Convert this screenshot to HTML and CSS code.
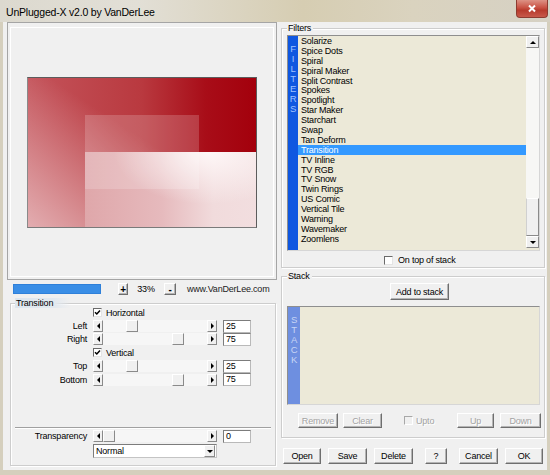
FILE: index.html
```html
<!doctype html>
<html lang="en">
  <head>
    <meta charset="UTF-8" />
    <title>UnPlugged-X v2.0 by VanDerLee</title>
    <link rel="stylesheet" href="styles.css">
  </head>
  <body>
    <div class="window">
      <div class="titlebar">
        <span class="title">UnPlugged-X v2.0 by VanDerLee</span>
        <span class="close">
          <svg viewBox="0 0 10 9" width="10" height="9"><path d="M2 1.5 L8 7.5 M8 1.5 L2 7.5" stroke="#fff" stroke-width="2" /></svg>
        </span>
      </div>
      <div class="client">
        <div class="left">
          <div class="preview">
            <div class="preview-inner">
              <div class="pic">
                <div class="pic-light"></div>
                <div class="pic-box"></div>
              </div>
            </div>
          </div>

          <div class="zoom-row">
            <div class="progress"></div>
            <span class="btn tiny">+</span>
            <span class="zoom-val">33%</span>
            <span class="btn tiny minus">-</span>
            <span class="url">www.VanDerLee.com</span>
          </div>

          <div class="group transition">
            <span class="group-title blue">Transition</span>
            <div class="params">
              <span></span>
              <span class="check"><span class="cb"><svg viewBox="0 0 7 7" width="7" height="7"><path d="M1 3.2 L2.8 5 L6 1.4" fill="none" stroke="#000" stroke-width="1.5" /></svg></span>Horizontal</span>
              <span></span>

              <span class="lbl">Left</span>
              <div class="slider"><span class="sbtn arr-l"></span><span class="track"><span class="thumb" style="--v: 0.25"></span></span><span class="sbtn arr-r"></span></div>
              <span class="edit">25</span>

              <span class="lbl">Right</span>
              <div class="slider"><span class="sbtn arr-l"></span><span class="track"><span class="thumb" style="--v: 0.75"></span></span><span class="sbtn arr-r"></span></div>
              <span class="edit">75</span>

              <span></span>
              <span class="check"><span class="cb"><svg viewBox="0 0 7 7" width="7" height="7"><path d="M1 3.2 L2.8 5 L6 1.4" fill="none" stroke="#000" stroke-width="1.5" /></svg></span>Vertical</span>
              <span></span>

              <span class="lbl">Top</span>
              <div class="slider"><span class="sbtn arr-l"></span><span class="track"><span class="thumb" style="--v: 0.25"></span></span><span class="sbtn arr-r"></span></div>
              <span class="edit">25</span>

              <span class="lbl">Bottom</span>
              <div class="slider"><span class="sbtn arr-l"></span><span class="track"><span class="thumb" style="--v: 0.75"></span></span><span class="sbtn arr-r"></span></div>
              <span class="edit">75</span>
            </div>

            <div class="separator"></div>

            <div class="params blend">
              <span class="lbl">Transparency</span>
              <div class="slider"><span class="sbtn arr-l"></span><span class="track"><span class="thumb" style="--v: 0"></span></span><span class="sbtn arr-r"></span></div>
              <span class="edit">0</span>

              <span></span>
              <div class="combo"><span class="combo-text">Normal</span><span class="sbtn arr-d"></span></div>
              <span></span>
            </div>
          </div>
        </div>

        <div class="right">
          <div class="group filters">
            <span class="group-title">Filters</span>
            <div class="listbox">
              <div class="strip">
                <span>F</span><span>I</span><span>L</span><span>T</span><span>E</span><span>R</span><span>S</span>
              </div>
              <div class="items">
                <div class="item">Solarize</div>
                <div class="item">Spice Dots</div>
                <div class="item">Spiral</div>
                <div class="item">Spiral Maker</div>
                <div class="item">Split Contrast</div>
                <div class="item">Spokes</div>
                <div class="item">Spotlight</div>
                <div class="item">Star Maker</div>
                <div class="item">Starchart</div>
                <div class="item">Swap</div>
                <div class="item">Tan Deform</div>
                <div class="item selected">Transition</div>
                <div class="item">TV Inline</div>
                <div class="item">TV RGB</div>
                <div class="item">TV Snow</div>
                <div class="item">Twin Rings</div>
                <div class="item">US Comic</div>
                <div class="item">Vertical Tile</div>
                <div class="item">Warning</div>
                <div class="item">Wavemaker</div>
                <div class="item">Zoomlens</div>
              </div>
              <div class="vscroll">
                <span class="sbtn arr-u"></span>
                <span class="vtrack"></span>
                <span class="vthumb"></span>
                <span class="sbtn arr-d"></span>
              </div>
            </div>
            <div class="ontop"><span class="cb"></span>On top of stack</div>
          </div>

          <div class="group stack">
            <span class="group-title">Stack</span>
            <span class="btn add">Add to stack</span>
            <div class="listbox stack-list">
              <div class="strip light">
                <span>S</span><span>T</span><span>A</span><span>C</span><span>K</span>
              </div>
              <div class="items"></div>
            </div>
            <div class="stack-buttons">
              <span class="btn off remove">Remove</span>
              <span class="btn off clear">Clear</span>
              <span class="upto"><span class="cb off"></span>Upto</span>
              <span class="btn off up">Up</span>
              <span class="btn off down">Down</span>
            </div>
          </div>

          <div class="dialog-buttons">
            <span class="btn open">Open</span>
            <span class="btn save">Save</span>
            <span class="btn delete">Delete</span>
            <span class="btn help">?</span>
            <span class="btn cancel">Cancel</span>
            <span class="btn ok">OK</span>
          </div>
        </div>
      </div>
    </div>
  </body>
</html>
```

FILE: styles.css
```css
* {
  box-sizing: border-box;
}
body {
  margin: 0;
  font-family: "Liberation Sans", Arial, sans-serif;
  font-size: 9px;
  letter-spacing: -0.2px;
  color: #000;
  background: #fff;
}
.window {
  width: 550px;
  height: 475px;
  display: flex;
  flex-direction: column;
  background: #d5cfbd;
  overflow: hidden;
}
.titlebar {
  height: 22px;
  flex: none;
  display: flex;
  align-items: center;
  padding-left: 6px;
  position: relative;
  background: linear-gradient(to right, #dcd9cf 0%, #e2dfd6 25%, #d6cdb2 55%, #dad3bf 75%, #d6d1c4 100%);
}
.title {
  font-size: 10.5px;
  letter-spacing: -0.2px;
  margin-top: 2px;
}
.close {
  position: absolute;
  top: 0;
  right: 2px;
  width: 32px;
  height: 18px;
  border: 1px solid #8d3b30;
  border-top: none;
  border-radius: 0 0 4px 4px;
  background: linear-gradient(#dd9285 0%, #c95244 45%, #b73a2c 60%, #c8594a 100%);
  display: flex;
  align-items: center;
  justify-content: center;
}
.client {
  flex: 1;
  margin: 0 3px 5px 3px;
  padding: 0 2px 0 4px;
  background: #f0f0f0;
  display: flex;
  gap: 4px;
}
.left {
  width: 270px;
  display: flex;
  flex-direction: column;
}
.right {
  width: 264px;
  display: flex;
  flex-direction: column;
}

/* preview */
.preview {
  height: 258px;
  border: 1px solid #a5a5a5;
  padding: 4px 2px 2px 2px;
  display: flex;
}
.preview-inner {
  flex: 1;
  border: 1px solid #fff;
  display: flex;
  align-items: center;
  justify-content: center;
}
.pic {
  width: 230px;
  height: 151px;
  border: 1px solid #5c5c5c;
  border-bottom-color: #7a7a7a;
  border-left-color: #8a8a8a;
  position: relative;
  background:
    linear-gradient(to top right, rgba(255, 255, 255, 0.52) 0%, rgba(255, 255, 255, 0) 55%),
    linear-gradient(to right, #c4545b 0%, #b9393f 50%, #a80d18 78%, #a3000c 100%);
}
.pic-light {
  position: absolute;
  left: 25%;
  top: 50%;
  right: 0;
  bottom: 0;
  background:
    radial-gradient(ellipse 55% 70% at 72% 0%, rgba(255, 250, 250, 0.9) 0%, rgba(255, 250, 250, 0) 100%),
    linear-gradient(to right, #dfa7aa 0%, #e6babd 45%, #f1dbdc 75%, #f2dedf 100%);
}
.pic-box {
  position: absolute;
  left: 25%;
  top: 25%;
  width: 50%;
  height: 50%;
  background: rgba(255, 255, 255, 0.18);
}

/* zoom row */
.zoom-row {
  margin-top: 3px;
  height: 12px;
  display: flex;
  align-items: center;
}
.progress {
  margin-left: 6px;
  width: 88px;
  height: 10px;
  background: #3a8ee6;
  border: 1px solid #2f80d9;
}
.btn {
  display: flex;
  align-items: center;
  justify-content: center;
  background: #f0f0f0;
  border: 1px solid;
  border-color: #fff #6e6e6e #6e6e6e #fff;
  box-shadow: inset -1px -1px 0 #b4b4b4;
  white-space: nowrap;
}
.tiny {
  margin-left: 17px;
  width: 10px;
  height: 12px;
  font-size: 10px;
  font-weight: bold;
}
.tiny.minus {
  margin-left: 0;
  width: 12px;
}
.zoom-val {
  width: 36px;
  text-align: center;
}
.url {
  margin-left: 11px;
  color: #222;
}

/* groups */
.group {
  position: relative;
  border: 1px solid #cdcdcd;
  box-shadow: inset 1px 1px 0 #fff, 1px 1px 0 #fff;
}
.group-title {
  position: absolute;
  top: -6px;
  left: 5px;
  height: 10px;
  line-height: 10px;
  padding: 0 2px 0 1px;
  background: #f0f0f0;
}
.group-title.blue {
  left: 4px;
  width: 56px;
  background: linear-gradient(to right, #dce5ee 0%, #e3e9ef 70%, rgba(240, 240, 240, 0) 100%);
}
.transition {
  margin-top: 8px;
  margin-left: 3px;
  width: 266px;
  padding: 2px 0 7px 0;
}
.params {
  display: grid;
  grid-template-columns: 76px 124px 28px;
  grid-auto-rows: 13.4px;
  column-gap: 6px;
  align-items: center;
}
.params.blend {
  grid-template-rows: 13.4px 14px;
  row-gap: 1.6px;
}
.lbl {
  text-align: right;
}
.check {
  display: flex;
  align-items: center;
  gap: 4px;
}
.cb {
  width: 9px;
  height: 9px;
  flex: none;
  display: inline-flex;
  align-items: center;
  justify-content: center;
  background: #fff;
  border: 1px solid;
  border-color: #6a6a6a #e4e4e4 #e4e4e4 #6a6a6a;
}
.cb.off {
  background: #f0f0f0;
  border-color: #a8a8a8 #fff #fff #a8a8a8;
}
.separator {
  margin: 41px 4px 0 4px;
  height: 2px;
  border-top: 1px solid #a0a0a0;
  border-bottom: 1px solid #fff;
}

/* sliders */
.slider {
  display: flex;
  height: 12px;
  background: #f6f6f6;
}
.sbtn {
  width: 10px;
  height: 12px;
  flex: none;
  display: flex;
  align-items: center;
  justify-content: center;
  background: #f0f0f0;
  border: 1px solid;
  border-color: #fff #8a8a8a #8a8a8a #fff;
}
.sbtn::before {
  content: "";
  width: 0;
  height: 0;
  border: 3px solid transparent;
}
.arr-l::before {
  border-right-color: #000;
  border-left-width: 0;
}
.arr-r::before {
  border-left-color: #000;
  border-right-width: 0;
}
.arr-u::before {
  border-bottom-color: #000;
  border-top-width: 0;
}
.arr-d::before {
  border-top-color: #000;
  border-bottom-width: 0;
}
.track {
  flex: 1;
  position: relative;
}
.thumb {
  position: absolute;
  top: 0;
  width: 12px;
  height: 12px;
  left: calc((100% - 12px) * var(--v));
  background: #f0f0f0;
  border: 1px solid;
  border-color: #fff #8a8a8a #8a8a8a #fff;
}
.edit {
  height: 13px;
  line-height: 11px;
  padding-left: 2px;
  background: #fff;
  border: 1px solid;
  border-color: #7c7c7c #b9b9b9 #b9b9b9 #7c7c7c;
}
.combo {
  height: 14px;
  display: flex;
  align-items: center;
  background: #fff;
  border: 1px solid;
  border-color: #7c7c7c #c4c4c4 #c4c4c4 #7c7c7c;
  padding: 0 1px 0 2px;
}
.combo-text {
  flex: 1;
}
.combo .sbtn {
  width: 11px;
  height: 12px;
}

/* filters */
.filters {
  margin-top: 6px;
  padding: 6px 3px 1px 5px;
}
.listbox {
  width: 253px;
  height: 216px;
  display: flex;
  background: #ece9d8;
  border: 1px solid;
  border-color: #8e8e8e #d6d6d6 #d6d6d6 #8e8e8e;
}
.strip {
  width: 10px;
  flex: none;
  display: flex;
  flex-direction: column;
  align-items: center;
  padding-top: 8px;
  line-height: 10px;
  font-size: 9.5px;
  background: #0f57e0;
  color: #9fc2ff;
}
.strip.light {
  width: 12px;
  background: #6e8fe0;
  color: #c7d5f5;
}
.items {
  flex: 1;
  overflow: hidden;
}
.item {
  height: 9.9px;
  line-height: 10px;
  padding-left: 3px;
  white-space: nowrap;
}
.item.selected {
  background: #3399ff;
  color: #fff;
}
.vscroll {
  width: 13px;
  flex: none;
  display: flex;
  flex-direction: column;
  padding-bottom: 2px;
}
.vscroll .sbtn {
  width: 13px;
  height: 12px;
}
.vtrack {
  flex: 1;
  background: #f7f7f5;
}
.vthumb {
  height: 38px;
  background: #f0f0f0;
  border: 1px solid;
  border-color: #fff #8a8a8a #8a8a8a #d0d0d0;
}
.ontop {
  margin-top: 3px;
  height: 12px;
  display: flex;
  align-items: center;
  gap: 5px;
  padding-left: 97px;
}

/* stack */
.stack {
  margin-top: 8px;
  padding: 6px 3px 9px 5px;
}
.add {
  margin-left: 103px;
  width: 59px;
  height: 17px;
}
.stack-list {
  margin-top: 6px;
  height: 99px;
}
.stack-buttons {
  margin-top: 8px;
  height: 15px;
  display: flex;
}
.off {
  color: #a3a3a3;
  text-shadow: 1px 1px 0 #fff;
}
.stack-buttons .btn {
  height: 15px;
}
.remove {
  margin-left: 11px;
  width: 40px;
}
.clear {
  margin-left: 5px;
  width: 39px;
}
.upto {
  width: 75px;
  padding-left: 22px;
  display: flex;
  align-items: center;
  gap: 3px;
  color: #a3a3a3;
  text-shadow: 1px 1px 0 #fff;
}
.up {
  width: 37px;
}
.down {
  margin-left: 6px;
  width: 41px;
}

/* dialog buttons */
.dialog-buttons {
  margin-top: 10px;
  height: 16px;
  display: flex;
}
.dialog-buttons .btn {
  height: 16px;
}
.open {
  margin-left: 2px;
  width: 38px;
}
.save {
  margin-left: 7px;
  width: 39px;
}
.delete {
  margin-left: 7px;
  width: 39px;
}
.help {
  margin-left: 12px;
  width: 22px;
}
.cancel {
  margin-left: 12px;
  width: 39px;
}
.ok {
  margin-left: 7px;
  width: 38px;
}
```
